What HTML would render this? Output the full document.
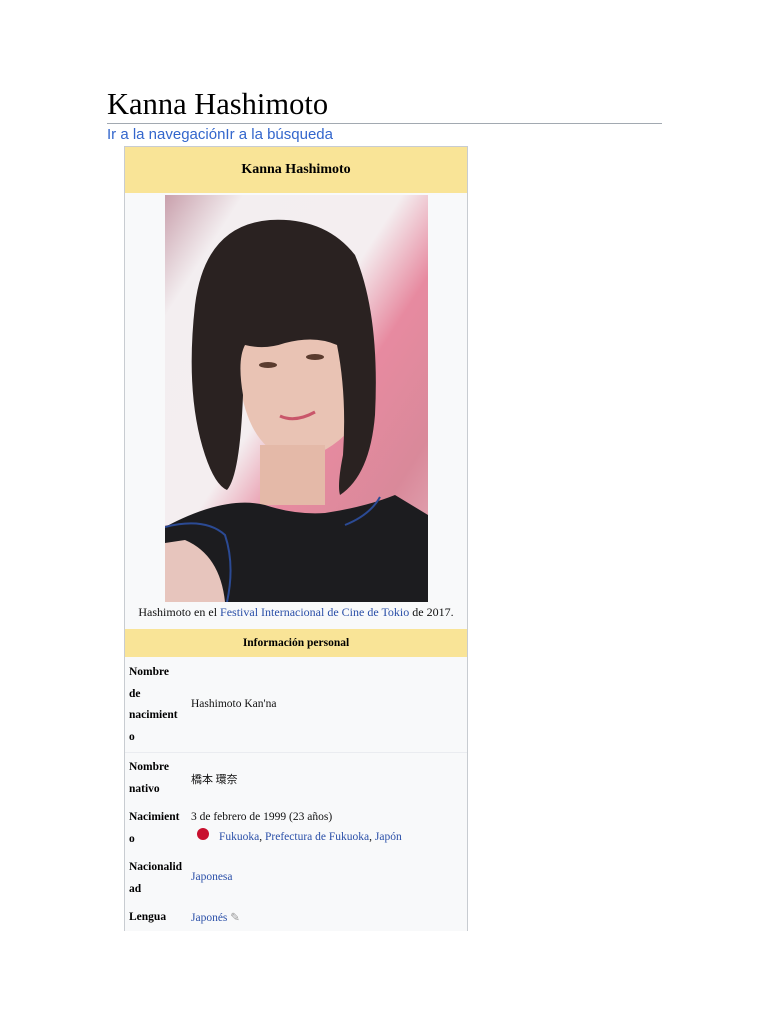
<!DOCTYPE html>
<html><head><meta charset="utf-8"><style>
body{margin:0;background:#fff;width:768px;height:1024px;position:relative;overflow:hidden;font-family:"Liberation Serif",serif;}
.a{position:absolute;}
a,.l{color:#2a4fa8 !important;text-decoration:none}
h1{position:absolute;left:107px;top:87px;margin:0;font-weight:normal;font-size:30.5px;color:#000;font-family:"Liberation Serif",serif;}
.hr{position:absolute;left:107px;top:123px;width:555px;height:1px;background:#a2a9b1}
.nav{position:absolute;left:107px;top:126px;font-family:"Liberation Sans",sans-serif;font-size:15px;color:#3366cc}
.box{position:absolute;left:124px;top:146px;width:342px;height:784px;border:1px solid #c8ccd1;border-bottom:none;background:#f8f9fa}
.yh{position:absolute;left:0;width:342px;background:#f9e497;text-align:center;font-weight:bold;color:#000}
.lab{position:absolute;left:4px;font-weight:bold;font-size:11.5px;line-height:21.5px;color:#000}
.val{position:absolute;left:66px;font-size:11.5px;color:#111}
.sep{position:absolute;left:0;width:342px;height:1px;background:#eaecf0}
</style></head><body>
<h1>Kanna Hashimoto</h1>
<div class="hr"></div>
<div class="nav">Ir a la navegaciónIr a la búsqueda</div>
<div class="box">
 <div class="yh" style="top:0;height:46px;line-height:46px;font-size:14px">Kanna Hashimoto</div>
 <svg class="a" style="left:40px;top:48px" width="263" height="407" viewBox="0 0 263 407">
  <defs><linearGradient id="bg" x1="0" y1="0" x2="1" y2="1">
   <stop offset="0" stop-color="#c9a0ac"/><stop offset="0.15" stop-color="#f3eef0"/><stop offset="0.45" stop-color="#f4eef0"/><stop offset="0.6" stop-color="#e78aa0"/><stop offset="0.8" stop-color="#d9899a"/><stop offset="1" stop-color="#e6b4bf"/></linearGradient></defs>
  <rect width="263" height="407" fill="url(#bg)"/>
  <rect x="0" y="330" width="263" height="77" fill="#e7c5bd"/>
  <path d="M72 135 Q70 245 120 262 Q150 268 180 240 Q190 200 182 130 Z" fill="#e9c3b4"/>
  <rect x="95" y="250" width="65" height="60" fill="#e4b9a8"/>
  <path d="M105 25 Q40 30 30 110 Q20 200 40 260 Q50 290 62 295 Q75 280 78 200 Q72 165 80 150 Q100 155 120 148 Q150 140 172 150 Q182 200 178 260 Q172 290 175 300 Q205 280 210 220 Q215 120 190 60 Q160 22 105 25 Z" fill="#2a2221"/>
  <path d="M0 332 Q60 300 100 310 Q130 320 160 318 Q200 312 230 300 L263 320 L263 407 L60 407 Q55 360 20 345 L0 348 Z" fill="#1c1c1f"/>
  <path d="M0 332 Q40 322 60 340 Q70 370 62 407" fill="none" stroke="#2b4a94" stroke-width="2"/>
  <path d="M215 302 Q205 320 180 330" fill="none" stroke="#2b4a94" stroke-width="2"/>
  <ellipse cx="103" cy="170" rx="9" ry="3" fill="#5a3b2e"/><ellipse cx="150" cy="162" rx="9" ry="3" fill="#5a3b2e"/>
  <path d="M115 221 Q130 228 150 217" stroke="#c9566a" stroke-width="3" fill="none"/>
 </svg>
 <div class="a" style="left:0;top:458px;width:342px;text-align:center;font-size:12px;color:#111">Hashimoto en el <span class="l">Festival Internacional de Cine de Tokio</span> de 2017.</div>
 <div class="yh" style="top:482px;height:28px;line-height:28px;font-size:11.5px">Información personal</div>
 <div class="lab" style="top:515px">Nombre<br>de<br>nacimient<br>o</div>
 <div class="val" style="top:551px">Hashimoto Kan'na</div>
 <div class="sep" style="top:605px"></div>
 <div class="lab" style="top:610px">Nombre<br>nativo</div>
 <div class="val" style="top:624px;font-family:'Noto Sans CJK JP',sans-serif;font-size:11px">橋本 環奈</div>
 <div class="lab" style="top:660px">Nacimient<br>o</div>
 <div class="val" style="top:664px">3 de febrero de 1999 (23 años)</div>
 <div class="a" style="left:72px;top:681px;width:12px;height:12px;border-radius:50%;background:#c8102e"></div>
 <div class="val" style="top:684px;left:94px"><span class="l">Fukuoka</span>, <span class="l">Prefectura de Fukuoka</span>, <span class="l">Japón</span></div>
 <div class="lab" style="top:710px">Nacionalid<br>ad</div>
 <div class="val" style="top:724px"><span class="l">Japonesa</span></div>
 <div class="lab" style="top:760px">Lengua</div>
 <div class="val" style="top:763px"><span class="l">Japonés</span> <span style="color:#999">✎</span></div>
</div>
</body></html>
